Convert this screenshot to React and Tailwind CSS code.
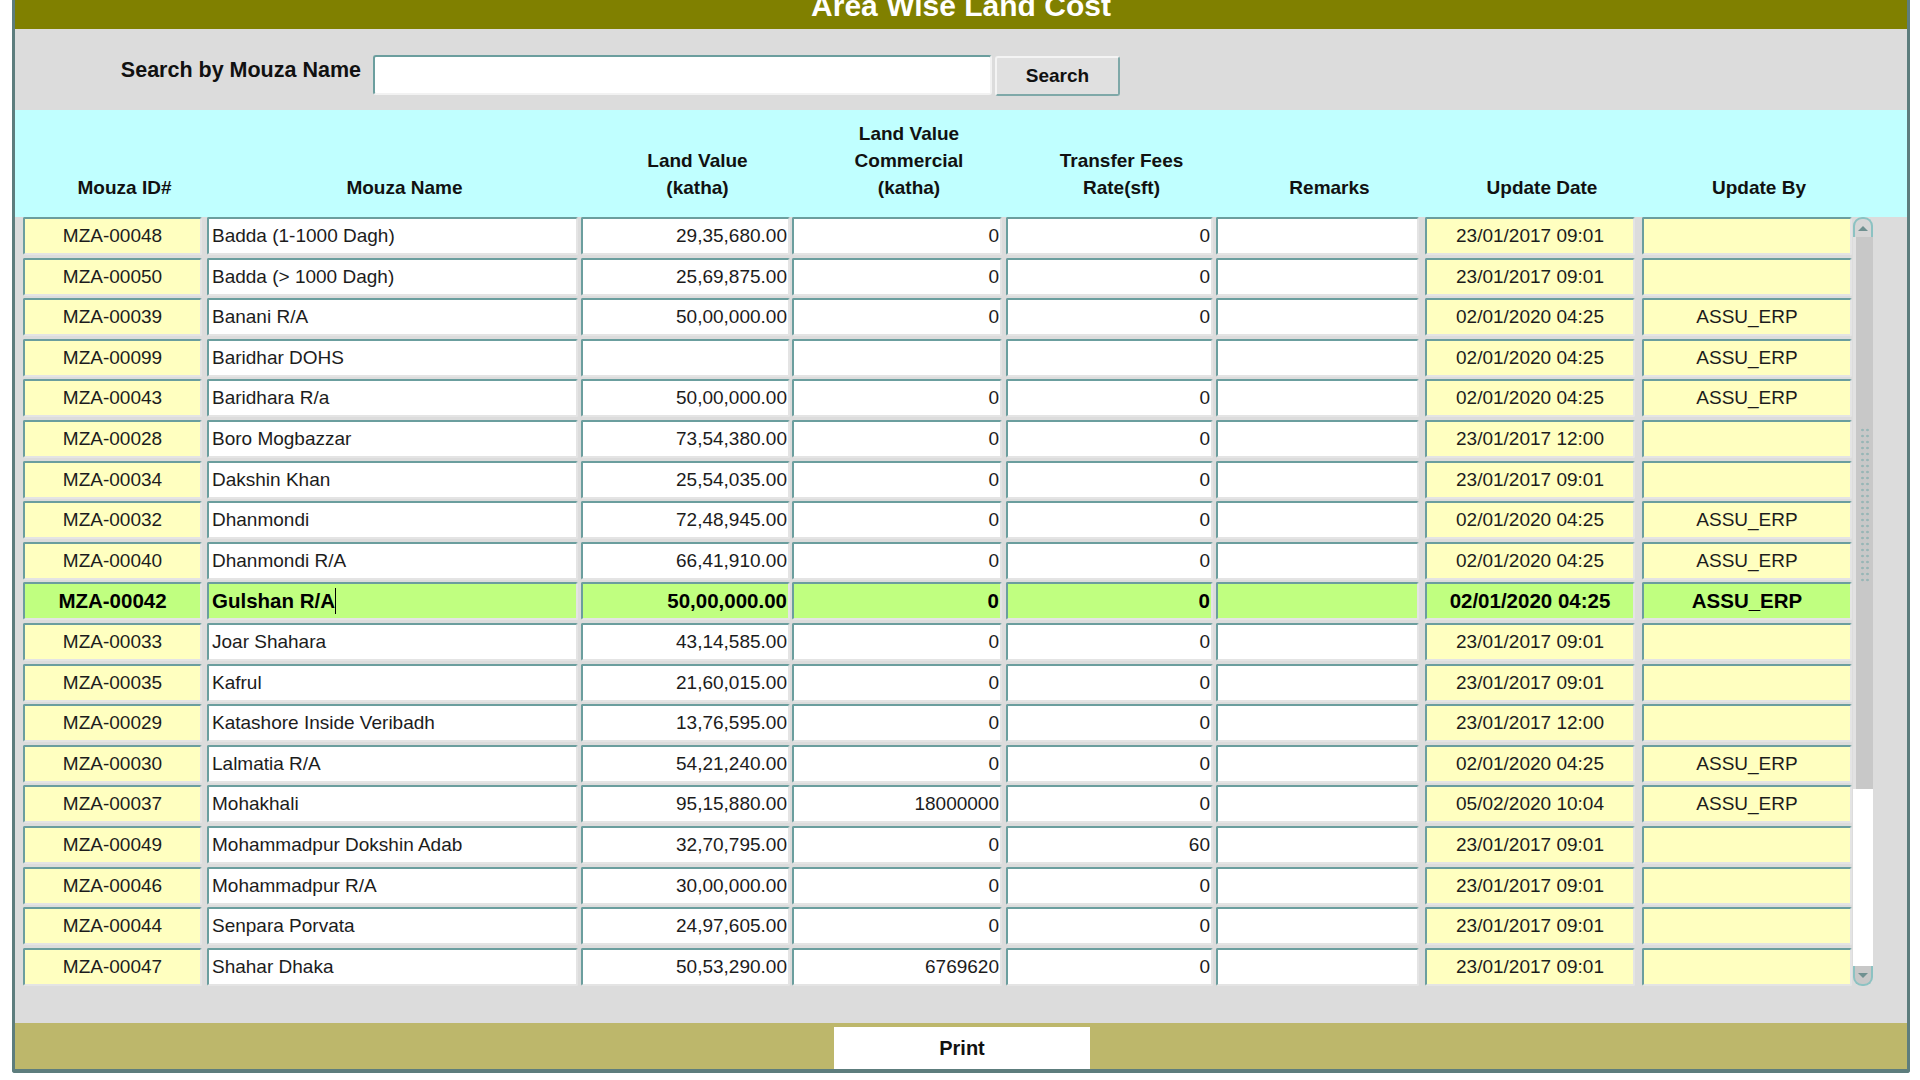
import React from "react";

// ── Area Wise Land Cost (Oracle-forms style grid) ─────────────────────────────
const COLS = [
  { key: "id", box: "ml-[8px] w-[179px]", align: "text-center", yellow: true },
  { key: "name", box: "ml-[5px] w-[371px]", align: "text-left pl-[3px]" },
  { key: "lv", box: "ml-[3px] w-[209px]", align: "text-right pr-[1px]" },
  { key: "com", box: "ml-[2px] w-[210px]", align: "text-right pr-[1px]" },
  { key: "tr", box: "ml-[4px] w-[207px]", align: "text-right pr-[1px]" },
  { key: "rem", box: "ml-[3px] w-[203px]", align: "text-left pl-[3px]" },
  { key: "date", box: "ml-[6px] w-[210px]", align: "text-center", yellow: true },
  { key: "by", box: "ml-[7px] w-[210px]", align: "text-center", yellow: true },
];

const HEADERS = [
  ["Mouza ID#"],
  ["Mouza Name"],
  ["Land Value", "(katha)"],
  ["Land Value", "Commercial", "(katha)"],
  ["Transfer Fees", "Rate(sft)"],
  ["Remarks"],
  ["Update Date"],
  ["Update By"],
];

const ROWS = [
  ["MZA-00048", "Badda (1-1000 Dagh)", "29,35,680.00", "0", "0", "", "23/01/2017 09:01", ""],
  ["MZA-00050", "Badda (> 1000 Dagh)", "25,69,875.00", "0", "0", "", "23/01/2017 09:01", ""],
  ["MZA-00039", "Banani R/A", "50,00,000.00", "0", "0", "", "02/01/2020 04:25", "ASSU_ERP"],
  ["MZA-00099", "Baridhar DOHS", "", "", "", "", "02/01/2020 04:25", "ASSU_ERP"],
  ["MZA-00043", "Baridhara R/a", "50,00,000.00", "0", "0", "", "02/01/2020 04:25", "ASSU_ERP"],
  ["MZA-00028", "Boro Mogbazzar", "73,54,380.00", "0", "0", "", "23/01/2017 12:00", ""],
  ["MZA-00034", "Dakshin Khan", "25,54,035.00", "0", "0", "", "23/01/2017 09:01", ""],
  ["MZA-00032", "Dhanmondi", "72,48,945.00", "0", "0", "", "02/01/2020 04:25", "ASSU_ERP"],
  ["MZA-00040", "Dhanmondi R/A", "66,41,910.00", "0", "0", "", "02/01/2020 04:25", "ASSU_ERP"],
  ["MZA-00042", "Gulshan R/A", "50,00,000.00", "0", "0", "", "02/01/2020 04:25", "ASSU_ERP"],
  ["MZA-00033", "Joar Shahara", "43,14,585.00", "0", "0", "", "23/01/2017 09:01", ""],
  ["MZA-00035", "Kafrul", "21,60,015.00", "0", "0", "", "23/01/2017 09:01", ""],
  ["MZA-00029", "Katashore Inside Veribadh", "13,76,595.00", "0", "0", "", "23/01/2017 12:00", ""],
  ["MZA-00030", "Lalmatia R/A", "54,21,240.00", "0", "0", "", "02/01/2020 04:25", "ASSU_ERP"],
  ["MZA-00037", "Mohakhali", "95,15,880.00", "18000000", "0", "", "05/02/2020 10:04", "ASSU_ERP"],
  ["MZA-00049", "Mohammadpur Dokshin Adab", "32,70,795.00", "0", "60", "", "23/01/2017 09:01", ""],
  ["MZA-00046", "Mohammadpur R/A", "30,00,000.00", "0", "0", "", "23/01/2017 09:01", ""],
  ["MZA-00044", "Senpara Porvata", "24,97,605.00", "0", "0", "", "23/01/2017 09:01", ""],
  ["MZA-00047", "Shahar Dhaka", "50,53,290.00", "6769620", "0", "", "23/01/2017 09:01", ""],
];

const SELECTED = 9;

function Cell({ col, value, active, caret }) {
  const bg = active ? "bg-[#c0ff80]" : col.yellow ? "bg-[#ffffc0]" : "bg-white";
  return (
    <div
      className={`${col.box} ${bg} h-[38px] shrink-0 rounded-[2px] border-2 border-t-[#6b9e9e] border-l-[#6b9e9e] border-b-[#e4e4e4] border-r-[#e4e4e4] overflow-hidden whitespace-nowrap`}
    >
      <div
        className={`${col.align} ${
          active ? "font-bold text-[20.5px] text-black" : "text-[19px] text-[#1c1c1c]"
        } leading-[34px]`}
      >
        {value}
        {caret && <span className="inline-block w-px h-[26px] bg-black align-middle -mt-[3px]" />}
      </div>
    </div>
  );
}

function Scrollbar() {
  return (
    <div className="ml-[1px] w-[20px] h-[769px] flex flex-col shrink-0">
      <div className="h-[20px] rounded-t-[9px] border-2 border-b-0 border-[#8cc2c2] bg-[#d6d6d6] flex items-center justify-center">
        <div className="w-0 h-0 border-l-[5px] border-r-[5px] border-b-[5px] border-l-transparent border-r-transparent border-b-[#6f9090]" />
      </div>
      <div className="h-[552px] bg-[#c8c8c8] border-l-[3px] border-[#e2e2e2] flex justify-center">
        <div className="mt-[190px] w-[10px] h-[155px] bg-[radial-gradient(circle,#98b6b6_1px,transparent_1.6px)] bg-[length:5px_6px]" />
      </div>
      <div className="flex-1 bg-white" />
      <div className="h-[20px] rounded-b-[9px] border-2 border-t-0 border-[#8cc2c2] bg-[#c8c8c8] flex items-center justify-center">
        <div className="w-0 h-0 border-l-[5px] border-r-[5px] border-t-[5px] border-l-transparent border-r-transparent border-t-[#6f9090]" />
      </div>
    </div>
  );
}

export default function App() {
  return (
    <div className="min-h-screen bg-white font-['Liberation_Sans',Arial,sans-serif] overflow-hidden">
      <div className="ml-[12px] w-[1898px] h-[1073px] border-l-[3px] border-r-[3px] border-b-[4px] border-[#5d7d7d] rounded-b-[3px] bg-[#dcdcdc] flex flex-col">
        {/* Title bar */}
        <div className="h-[29px] bg-[#808000] overflow-hidden flex justify-center">
          <div className="-mt-[9px] text-[30px] leading-[30px] font-bold text-white">Area Wise Land Cost</div>
        </div>

        {/* Search */}
        <div className="h-[81px] flex items-start pt-[26px]">
          <div className="w-[346px] mt-[3px] text-right text-[21.5px] leading-[25px] font-bold text-[#111]">
            Search by Mouza Name
          </div>
          <input
            className="ml-[12px] w-[619px] h-[40px] bg-white rounded-[3px] border-2 border-t-[#6b9e9e] border-l-[#6b9e9e] border-b-[#f2f2f2] border-r-[#f2f2f2] outline-none px-2 text-[19px]"
            defaultValue=""
          />
          <button className="ml-[3px] mt-[1px] w-[125px] h-[40px] rounded-[3px] bg-[#e0e0e0] border-2 border-t-[#f4f4f4] border-l-[#f4f4f4] border-b-[#7fa8a8] border-r-[#7fa8a8] text-[19px] font-bold text-[#111]">
            Search
          </button>
        </div>

        {/* Column headers */}
        <div className="h-[107px] bg-[#c0ffff] flex items-end pb-[16px]">
          {COLS.map((c, i) => (
            <div key={c.key} className={`${c.box} shrink-0 pl-[24px] text-center text-[19px] leading-[27px] font-bold text-[#111]`}>
              {HEADERS[i].map((l) => (
                <div key={l}>{l}</div>
              ))}
            </div>
          ))}
        </div>

        {/* Rows */}
        <div className="h-[806px] flex items-start">
          <div className="flex flex-col gap-[2.6px]">
            {ROWS.map((r, ri) => (
              <div key={r[0]} className="flex">
                {COLS.map((c, ci) => (
                  <Cell key={c.key} col={c} value={r[ci]} active={ri === SELECTED} caret={ri === SELECTED && ci === 1} />
                ))}
              </div>
            ))}
          </div>
          <Scrollbar />
        </div>

        {/* Footer */}
        <div className="h-[46px] bg-[#bdb76b] flex justify-center pt-[4px]">
          <button className="ml-[2px] w-[256px] h-[42px] bg-white text-[20px] font-bold text-[#111]">Print</button>
        </div>
      </div>
    </div>
  );
}
